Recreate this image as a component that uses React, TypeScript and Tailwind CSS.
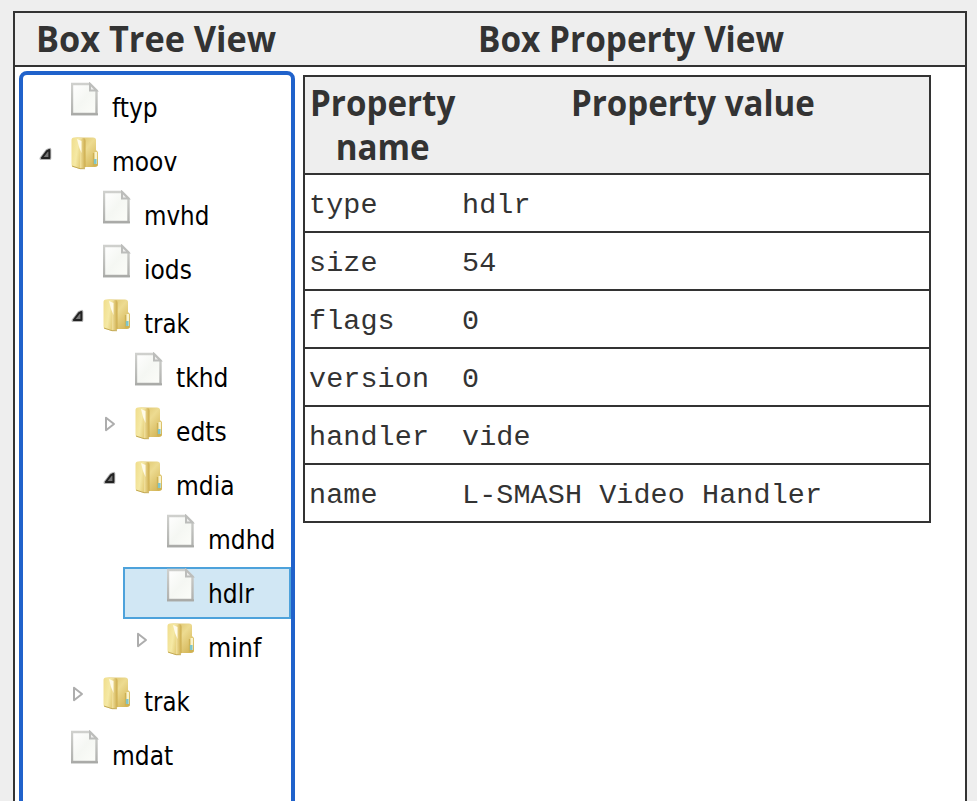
import React from "react";

type Kind = "file" | "open" | "closed";
type TreeRow = { name: string; level: number; kind: Kind; selected?: boolean; width: number };

const rows: TreeRow[] = [
  { name: "ftyp", level: 0, kind: "file", width: 46 },
  { name: "moov", level: 0, kind: "open", width: 65 },
  { name: "mvhd", level: 1, kind: "file", width: 65 },
  { name: "iods", level: 1, kind: "file", width: 48 },
  { name: "trak", level: 1, kind: "open", width: 46 },
  { name: "tkhd", level: 2, kind: "file", width: 52 },
  { name: "edts", level: 2, kind: "closed", width: 51 },
  { name: "mdia", level: 2, kind: "open", width: 58 },
  { name: "mdhd", level: 3, kind: "file", width: 67 },
  { name: "hdlr", level: 3, kind: "file", selected: true, width: 46 },
  { name: "minf", level: 3, kind: "closed", width: 53 },
  { name: "trak", level: 1, kind: "closed", width: 46 },
  { name: "mdat", level: 0, kind: "file", width: 61 },
];

const properties = [
  ["type", "hdlr"],
  ["size", "54"],
  ["flags", "0"],
  ["version", "0"],
  ["handler", "vide"],
  ["name", "L-SMASH Video Handler"],
];

function FileIcon() {
  return (
    <svg width="28" height="34" viewBox="0 0 28 34" className="block shrink-0">
      <defs>
        <linearGradient id="paper" x1="0" y1="0" x2="1" y2="1">
          <stop offset="0" stopColor="#ffffff" />
          <stop offset=".5" stopColor="#f5f7f3" />
          <stop offset="1" stopColor="#fcfdf9" />
        </linearGradient>
        <linearGradient id="edge" x1="0" y1="0" x2="0" y2="1">
          <stop offset="0" stopColor="#cfd0cd" />
          <stop offset="1" stopColor="#b0b1ae" />
        </linearGradient>
      </defs>
      <path d="M1 2H19L25.5 8.5V32H1Z" fill="url(#paper)" stroke="url(#edge)" strokeWidth="2.4" />
      <path d="M19 2V8.5H25.5Z" fill="#eeeeed" stroke="#bcbdbb" strokeWidth="2" />
      <path d="M0 32.3H27" stroke="#a9aaa7" strokeWidth="2" />
    </svg>
  );
}

function FolderIcon() {
  return (
    <svg width="28" height="34" viewBox="0 0 28 34" className="block shrink-0">
      <defs>
        <linearGradient id="back" x1="0" x2="1" y1="0" y2="1">
          <stop offset="0" stopColor="#d8bd62" />
          <stop offset=".45" stopColor="#eddb91" />
          <stop offset="1" stopColor="#cfae4c" />
        </linearGradient>
        <linearGradient id="front" x1="0" x2="1" y1="0" y2=".35">
          <stop offset="0" stopColor="#f0dd8b" />
          <stop offset=".5" stopColor="#f5e9a5" />
          <stop offset="1" stopColor="#dcc064" />
        </linearGradient>
        <linearGradient id="flap" x1="0" x2="1" y1="0" y2="0">
          <stop offset="0" stopColor="#f3e3a0" />
          <stop offset="1" stopColor="#cbaa4a" />
        </linearGradient>
      </defs>
      <path d="M3 1.5H22Q25 1.5 25 4V14L27 16V28Q27 31 24 31H13V3Z" fill="url(#back)" />
      <path d="M0.5 4Q0.5 1.5 3 1.5H8L14 4V31L10 33L1.5 31Q0.5 30 0.5 28Z" fill="url(#front)" />
      <path d="M9 4L12 2Q14.5 2 14.5 5V31Q13 33.5 9 32.5V9Z" fill="url(#flap)" />
      <path d="M6 3L10.5 5V17L8 11Z" fill="#fffced" opacity=".95" />
      <path d="M22.5 17V29H26.5" fill="none" stroke="#cdb153" strokeWidth="1.3" />
      <path d="M24.8 16V28" stroke="#f9f3ce" strokeWidth="2.5" />
      <path d="M24.2 23V28" stroke="#80c5ca" strokeWidth="2.7" />
      <path d="M1 30L9 32.7H14" fill="none" stroke="#c4aa57" strokeWidth="1" />
    </svg>
  );
}

function Toggle({ kind }: { kind: Kind }) {
  if (kind === "file") return null;
  if (kind === "open") {
    return (
      <svg width="14" height="14" viewBox="0 0 14 14" className="mt-2.5 block">
        <path d="M10.8 2.4V11.4H2L8 3.4Z" fill="#555" stroke="#b5b5b5" strokeWidth="3" strokeLinejoin="round" />
        <path d="M10.4 3V11H2.8L8 4.2Z" fill="#777" stroke="#222" strokeWidth="2" strokeLinejoin="round" />
      </svg>
    );
  }
  return (
    <svg width="14" height="18" viewBox="0 0 14 18" className="mt-2 block">
      <path d="M3 2.8L11 9L3 15.2Z" fill="#fff" stroke="#adadad" strokeWidth="2" strokeLinejoin="round" />
    </svg>
  );
}

function FittedText({ children, width }: { children: React.ReactNode; width: number }) {
  const ref = React.useRef<HTMLSpanElement>(null);
  const [scale, setScale] = React.useState(1);
  React.useLayoutEffect(() => {
    if (ref.current) setScale(width / ref.current.offsetWidth);
  }, [width]);
  return (
    <span ref={ref} className="inline-block origin-left text-center whitespace-nowrap" style={{ transform: `scaleX(${scale})` }}>
      {children}
    </span>
  );
}

function Heading({ children, width }: { children: React.ReactNode; width: number }) {
  return (
    <span className="block text-left font-['Open_Sans',sans-serif] text-[35px] leading-[44px] font-bold" style={{ width }}>
      <FittedText width={width}>{children}</FittedText>
    </span>
  );
}

function BoxTree() {
  return (
    <div className="mt-1 ml-1 h-[760px] w-[276px] shrink-0 rounded-lg border-4 border-[#2062cb] bg-white pt-1.5 text-black">
      {rows.map((row, index) => (
        <div key={index} className="flex h-[54px]">
          <div className="shrink-0" style={{ width: row.level * 32 + 4 }} />
          <div
            className={
              row.selected
                ? "flex h-[52px] min-w-0 flex-1 border-2 border-[#4da2db] bg-[#d1e7f4]"
                : "flex h-[52px] min-w-0 flex-1 border-2 border-transparent"
            }
          >
            <div className="w-[42px] shrink-0 pl-2.5">
              <Toggle kind={row.kind} />
            </div>
            <div className="-mt-px">{row.kind === "file" ? <FileIcon /> : <FolderIcon />}</div>
            <div className="pt-[9px] pl-[13px] font-['DejaVu_Sans_Condensed','DejaVu_Sans',sans-serif] text-[26px] leading-8">
              <FittedText width={row.width}>{row.name}</FittedText>
            </div>
          </div>
        </div>
      ))}
    </div>
  );
}

function PropertyTable() {
  return (
    <div className="mt-2 ml-2 h-[448px] w-[628px] shrink-0 border-2 border-[#333]">
      <div className="flex h-[96px] bg-[#eee] pt-1">
        <div className="flex w-[154px] justify-center">
          <Heading width={145}>
            Property
            <br />
            name
          </Heading>
        </div>
        <div className="flex flex-1 justify-center pr-0.5">
          <Heading width={244}>Property value</Heading>
        </div>
      </div>
      {properties.map(([name, value]) => (
        <div
          key={name}
          className="flex h-[58px] items-center border-t-2 border-[#333] pt-[5px] font-['Liberation_Mono',monospace] text-[28.4px] leading-8 tracking-[0.11px]"
        >
          <div className="w-[154px] shrink-0 pl-1">{name}</div>
          <div className="pl-[3px]">{value}</div>
        </div>
      ))}
    </div>
  );
}

export default function App() {
  return (
    <main className="h-[801px] w-[977px] overflow-hidden bg-[#eee] pt-[11px] pl-[13px] text-[#333]">
      <div className="h-[800px] w-[954px] border-2 border-[#333] bg-white">
        <header className="flex h-[54px] border-b-2 border-[#333] bg-[#eee] pt-1">
          <div className="flex w-[282px] justify-center">
            <Heading width={240}>Box Tree View</Heading>
          </div>
          <div className="flex flex-1 pl-[181px]">
            <Heading width={306}>Box Property View</Heading>
          </div>
        </header>
        <div className="flex">
          <BoxTree />
          <PropertyTable />
        </div>
      </div>
    </main>
  );
}
